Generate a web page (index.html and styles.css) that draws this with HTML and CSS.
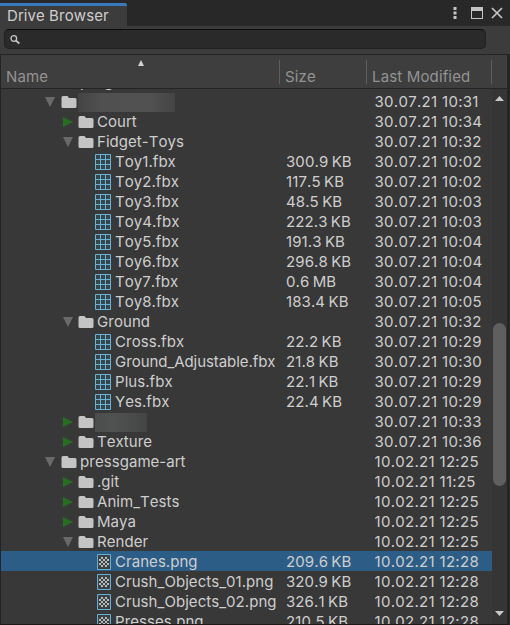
FILE: index.html
```html
<!DOCTYPE html>
<html lang="en">
<head>
<meta charset="utf-8">
<title>Drive Browser</title>
<link rel="stylesheet" href="styles.css">
</head>
<body>
<svg class="defs" aria-hidden="true">
  <symbol id="open" viewBox="0 0 10 10"><path d="M0 0H10L5 10Z" fill="#6a6a6a"/></symbol>
  <symbol id="closed" viewBox="0 0 10 10"><path d="M0 0L10 5L0 10Z" fill="#237023"/></symbol>
  <symbol id="folder" viewBox="0 0 16 16"><path d="M2 2H6.500L8 4H14Q15.500 4 15.500 5.500V12.500Q15.500 14 14 14H2Q.5 14 .5 12.500V3.500Q.5 2 2 2Z" fill="#c4c4c4"/></symbol>
  <symbol id="mesh" viewBox="0 0 16 16"><path d="M0 0H16V16H0Z" fill="#35454c"/><path d="M.5 .5H15.500V15.500H.5ZM5.500 0V16M10.500 0V16M0 5.500H16M0 10.500H16" fill="none" stroke="#67b4d6"/></symbol>
  <symbol id="image" viewBox="0 0 16 16"><path d="M2.500 .5H15.500V15.500H2.500Z" fill="#3c4246" stroke="#65b1d3"/><path d="M6 3h2v2h-2zM10 3h2v2h-2zM4 5h2v2h-2zM8 5h2v2h-2zM12 5h2v2h-2zM6 7h2v2h-2zM10 7h2v2h-2zM4 9h2v2h-2zM8 9h2v2h-2zM12 9h2v2h-2zM6 11h2v2h-2zM10 11h2v2h-2z" fill="#b8b8b8"/></symbol>
</svg>
<div class="window">
  <header class="titlebar">
    <div class="tab">Drive Browser</div>
    <svg class="controls" width="56" height="16" viewBox="0 0 56 16">
      <path d="M2.500 2h3v3h-3zM2.500 6.500h3v3h-3zM2.500 11h3v3h-3z" fill="#c4c4c4"/>
      <path d="M20 2h12v12H20zM21 6v7h10V6z" fill="#c4c4c4" fill-rule="evenodd"/>
      <path d="M41 3L51 13M51 3L41 13" stroke="#c4c4c4" stroke-width="1.700"/>
    </svg>
  </header>
  <div class="toolbar">
    <div class="search"><svg width="12" height="12" viewBox="0 0 12 12"><circle cx="3.800" cy="4.500" r="2.800" fill="none" stroke="#c4c4c4" stroke-width="1.300"/><path d="M5.800 6.500L9.300 9.500" stroke="#c4c4c4" stroke-width="1.700"/></svg></div>
  </div>
  <div class="head">
    <div class="h-name">Name<svg class="sort" width="6" height="6" viewBox="0 0 6 6"><path d="M3 0L6 6H0Z" fill="#d2d2d2"/></svg></div>
    <div class="h-size">Size</div>
    <div class="h-date">Last Modified</div>
    <div class="h-end"></div>
  </div>
  <div class="body">
    <div class="list">
      <div class="row l0"><span class="name"><i class="arrow"></i><i class="icon"></i><b>prog</b></span></div>
      <div class="row l0"><span class="name"><svg class="arrow"><use href="#open"/></svg><svg class="icon"><use href="#folder"/></svg><span class="redacted wide"></span></span><span></span><span class="date">30.07.21 10:31</span></div>
      <div class="row l1"><span class="name"><svg class="arrow"><use href="#closed"/></svg><svg class="icon"><use href="#folder"/></svg><b>Court</b></span><span></span><span class="date">30.07.21 10:34</span></div>
      <div class="row l1"><span class="name"><svg class="arrow"><use href="#open"/></svg><svg class="icon"><use href="#folder"/></svg><b>Fidget-Toys</b></span><span></span><span class="date">30.07.21 10:32</span></div>
      <div class="row l2"><span class="name"><svg class="icon"><use href="#mesh"/></svg><b>Toy1.fbx</b></span><span class="size">300.9 KB</span><span class="date">30.07.21 10:02</span></div>
      <div class="row l2"><span class="name"><svg class="icon"><use href="#mesh"/></svg><b>Toy2.fbx</b></span><span class="size">117.5 KB</span><span class="date">30.07.21 10:02</span></div>
      <div class="row l2"><span class="name"><svg class="icon"><use href="#mesh"/></svg><b>Toy3.fbx</b></span><span class="size">48.5 KB</span><span class="date">30.07.21 10:03</span></div>
      <div class="row l2"><span class="name"><svg class="icon"><use href="#mesh"/></svg><b>Toy4.fbx</b></span><span class="size">222.3 KB</span><span class="date">30.07.21 10:03</span></div>
      <div class="row l2"><span class="name"><svg class="icon"><use href="#mesh"/></svg><b>Toy5.fbx</b></span><span class="size">191.3 KB</span><span class="date">30.07.21 10:04</span></div>
      <div class="row l2"><span class="name"><svg class="icon"><use href="#mesh"/></svg><b>Toy6.fbx</b></span><span class="size">296.8 KB</span><span class="date">30.07.21 10:04</span></div>
      <div class="row l2"><span class="name"><svg class="icon"><use href="#mesh"/></svg><b>Toy7.fbx</b></span><span class="size">0.6 MB</span><span class="date">30.07.21 10:04</span></div>
      <div class="row l2"><span class="name"><svg class="icon"><use href="#mesh"/></svg><b>Toy8.fbx</b></span><span class="size">183.4 KB</span><span class="date">30.07.21 10:05</span></div>
      <div class="row l1"><span class="name"><svg class="arrow"><use href="#open"/></svg><svg class="icon"><use href="#folder"/></svg><b>Ground</b></span><span></span><span class="date">30.07.21 10:32</span></div>
      <div class="row l2"><span class="name"><svg class="icon"><use href="#mesh"/></svg><b>Cross.fbx</b></span><span class="size">22.2 KB</span><span class="date">30.07.21 10:29</span></div>
      <div class="row l2"><span class="name"><svg class="icon"><use href="#mesh"/></svg><b class="long">Ground_Adjustable.fbx</b></span><span class="size">21.8 KB</span><span class="date">30.07.21 10:30</span></div>
      <div class="row l2"><span class="name"><svg class="icon"><use href="#mesh"/></svg><b>Plus.fbx</b></span><span class="size">22.1 KB</span><span class="date">30.07.21 10:29</span></div>
      <div class="row l2"><span class="name"><svg class="icon"><use href="#mesh"/></svg><b>Yes.fbx</b></span><span class="size">22.4 KB</span><span class="date">30.07.21 10:29</span></div>
      <div class="row l1"><span class="name"><svg class="arrow"><use href="#closed"/></svg><svg class="icon"><use href="#folder"/></svg><span class="redacted"></span></span><span></span><span class="date">30.07.21 10:33</span></div>
      <div class="row l1"><span class="name"><svg class="arrow"><use href="#closed"/></svg><svg class="icon"><use href="#folder"/></svg><b>Texture</b></span><span></span><span class="date">30.07.21 10:36</span></div>
      <div class="row l0"><span class="name"><svg class="arrow"><use href="#open"/></svg><svg class="icon"><use href="#folder"/></svg><b>pressgame-art</b></span><span></span><span class="date">10.02.21 12:25</span></div>
      <div class="row l1"><span class="name"><svg class="arrow"><use href="#closed"/></svg><svg class="icon"><use href="#folder"/></svg><b>.git</b></span><span></span><span class="date">10.02.21 11:25</span></div>
      <div class="row l1"><span class="name"><svg class="arrow"><use href="#closed"/></svg><svg class="icon"><use href="#folder"/></svg><b>Anim_Tests</b></span><span></span><span class="date">10.02.21 12:25</span></div>
      <div class="row l1"><span class="name"><svg class="arrow"><use href="#closed"/></svg><svg class="icon"><use href="#folder"/></svg><b>Maya</b></span><span></span><span class="date">10.02.21 12:25</span></div>
      <div class="row l1"><span class="name"><svg class="arrow"><use href="#open"/></svg><svg class="icon"><use href="#folder"/></svg><b>Render</b></span><span></span><span class="date">10.02.21 12:25</span></div>
      <div class="row l2 selected"><span class="name"><svg class="icon"><use href="#image"/></svg><b>Cranes.png</b></span><span class="size">209.6 KB</span><span class="date">10.02.21 12:28</span></div>
      <div class="row l2"><span class="name"><svg class="icon"><use href="#image"/></svg><b>Crush_Objects_01.png</b></span><span class="size">320.9 KB</span><span class="date">10.02.21 12:28</span></div>
      <div class="row l2"><span class="name"><svg class="icon"><use href="#image"/></svg><b>Crush_Objects_02.png</b></span><span class="size">326.1 KB</span><span class="date">10.02.21 12:28</span></div>
      <div class="row l2"><span class="name"><svg class="icon"><use href="#image"/></svg><b>Presses.png</b></span><span class="size">210.5 KB</span><span class="date">10.02.21 12:28</span></div>
    </div>
    <div class="scrollbar">
      <svg width="9" height="5" viewBox="0 0 9 5"><path d="M4.500 0L9 5H0Z" fill="#c8c8c8"/></svg>
      <div class="thumb"></div>
      <svg width="9" height="5" viewBox="0 0 9 5"><path d="M0 0H9L4.500 5Z" fill="#c8c8c8"/></svg>
    </div>
  </div>
</div>
</body>
</html>
```
FILE: styles.css
```css
* { box-sizing: border-box; }
body {
  margin: 0;
  background: #282828;
  font-family: Inter, "Liberation Sans", sans-serif;
  font-size: 15px;
  letter-spacing: 0.1px;
  font-kerning: none;
  font-feature-settings: "calt" 0;
  color: #cecece;
}
.defs { position: absolute; width: 0; height: 0; }
.window { width: 510px; height: 625px; display: flex; flex-direction: column; overflow: hidden; }
.titlebar { height: 26px; display: flex; justify-content: space-between; align-items: flex-start; padding-top: 3px; }
.tab {
  width: 127px;
  height: 23px;
  padding-left: 7px;
  line-height: 20px;
  background: #3c3c3c;
  border-top: 3px solid #3a79bb;
  border-top-right-radius: 2px;
  white-space: nowrap;
}
.controls { margin: 2px 3px 0 0; }
.toolbar { height: 28px; padding: 3px 24px 0 4px; background: #3c3c3c; }
.search {
  height: 20px;
  padding: 4px 0 0 5px;
  background: #2a2a2a;
  border: 1px solid #212121;
  border-top-color: #0d0d0d;
  border-radius: 5px;
}
.search svg { display: block; }
.head {
  height: 35px;
  display: grid;
  grid-template-columns: 278px 87px 125px 1fr;
  margin-right: 1px;
  padding-top: 5px;
  background: #3e3e3e;
  border: 1px solid #242424;
  border-right-width: 2px;
  color: #939393;
  line-height: 33px;
  letter-spacing: 0.15px;
}
.head > div { height: 24px; white-space: nowrap; }
.h-name { position: relative; padding-left: 5px; }
.sort { position: absolute; left: 137px; top: 0; }
.h-size, .h-date { border-left: 1px solid #5f5f5f; padding-left: 5px; }
.h-end { border-left: 1px solid #5f5f5f; }
.body {
  flex: 1;
  min-height: 0;
  display: flex;
  margin-right: 1px;
  background: #383838;
  border-left: 1px solid #242424;
  border-right: 2px solid #242424;
  border-bottom: 1px solid #1d191b;
}
.list { width: 491px; overflow: hidden; }
.row {
  height: 20px;
  display: grid;
  grid-template-columns: 285px 88.5px 1fr;
  line-height: 22px;
  white-space: nowrap;
}
.row:first-child { margin-top: -18px; }
.row b { font-weight: 400; letter-spacing: 0.05px; }
.row .long { letter-spacing: -0.06px; }
.name { display: flex; align-items: center; height: 22px; }
.l0 .name { padding-left: 44px; }
.l1 .name { padding-left: 62px; }
.l2 .name { padding-left: 94px; }
.size { letter-spacing: 0.1px; word-spacing: -1px; }
.date { letter-spacing: 0.3px; }
.arrow { width: 10px; height: 10px; margin-right: 6px; }
.l1 .arrow { margin-right: 5px; }
.icon { width: 16px; height: 16px; margin: 0 3px 0 0; }
.l2 .icon { margin-right: 4px; }
.selected { background: #2c5d87; }
.redacted { width: 52px; height: 19px; margin-left: -2px; background: linear-gradient(90deg, #4b4d4d, #505151 35%, #454545); }
.redacted.wide { width: 97px; background: linear-gradient(90deg, #444, #505050 25%, #515151 75%, #444); }
.scrollbar { flex: 1; display: flex; flex-direction: column; align-items: center; background: #353535; padding: 7px 0 8px; }
.thumb { width: 13px; height: 163px; margin: 222px 0 auto; background: #5f5f5f; border-radius: 7px; }
```
